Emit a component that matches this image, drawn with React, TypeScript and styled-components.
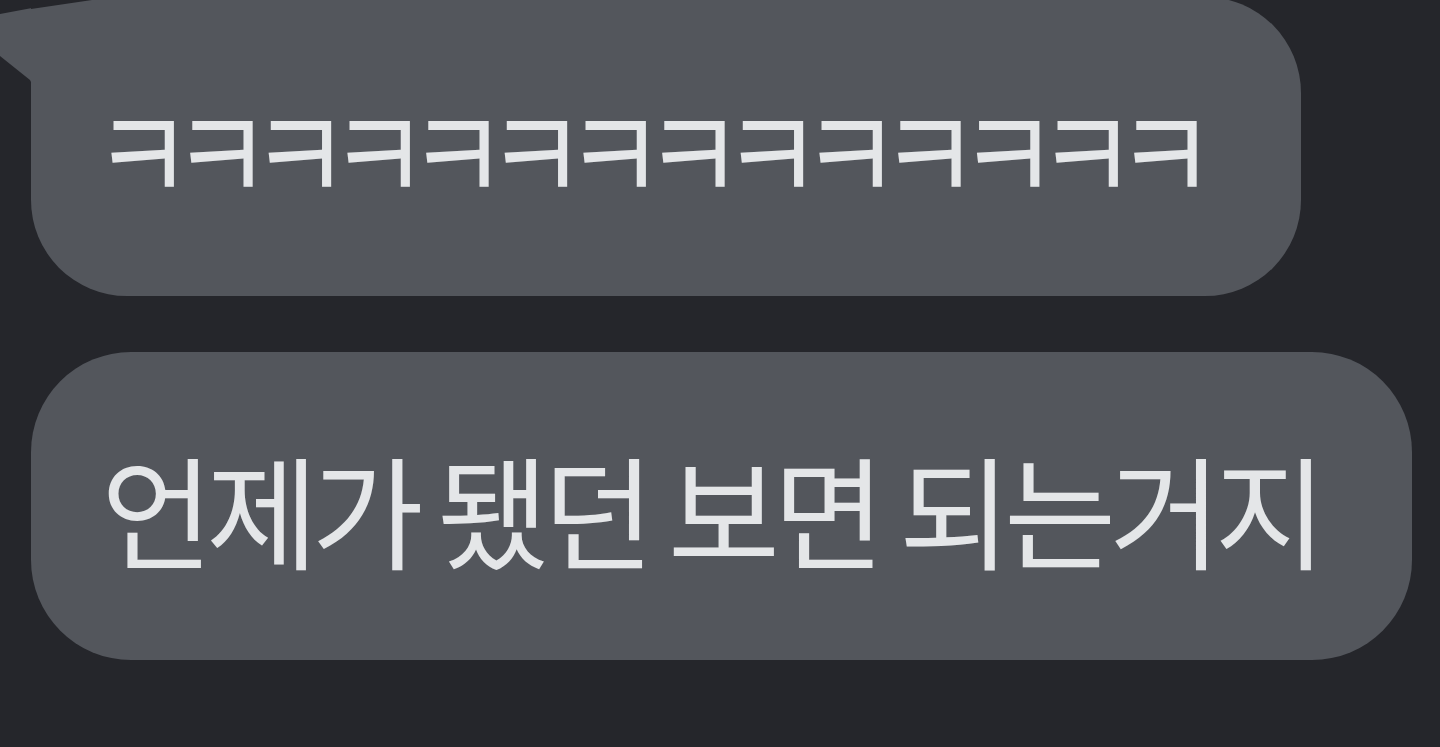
import React from 'react';
import styled, { createGlobalStyle } from 'styled-components';

const GlobalStyle = createGlobalStyle`
  html, body {
    margin: 0;
    padding: 0;
    background: #25262b;
  }
`;

const Screen = styled.div`
  width: 1440px;
  height: 747px;
  overflow: hidden;
  background: #25262b;
  display: flex;
  flex-direction: column;
  align-items: flex-start;
  gap: 56px;
  font-family: 'Noto Sans CJK KR', 'Noto Sans', sans-serif;
`;

const Bubble = styled.div<{ $first?: boolean }>`
  position: relative;
  box-sizing: border-box;
  display: flex;
  align-items: center;
  margin-left: 31px;
  margin-top: ${({ $first }) => ($first ? '-3px' : '0')};
  height: ${({ $first }) => ($first ? '299px' : '308px')};
  padding: ${({ $first }) => ($first ? '0 108px 2px 62px' : '2px 92px 0 70px')};
  background: #53565c;
  border-radius: ${({ $first }) => ($first ? '0 96px 96px 96px' : '100px')};
  color: #e4e6e8;
  font-weight: 400;
  line-height: 1;
  white-space: nowrap;
`;

const Text = styled.span<{ $size: number; $spacing: number; $squeeze?: number }>`
  display: inline-block;
  font-size: ${({ $size }) => `${$size}px`};
  letter-spacing: ${({ $spacing }) => `${$spacing}px`};
  transform: ${({ $squeeze }) => ($squeeze ? `scaleX(${$squeeze})` : 'none')};
  transform-origin: left center;
  margin-right: ${({ $squeeze }) => ($squeeze ? '-243px' : '0')};
`;

const Tail = styled.svg`
  position: absolute;
  left: -31px;
  top: 3px;
`;

const App: React.FC = () => {
  return (
    <>
      <GlobalStyle />
      <Screen>
        <Bubble $first>
          <Tail width="100" height="90" viewBox="0 0 100 90">
            <path d="M0 14 L32 8 L32 84 L30 80 L0 56 Z" fill="#53565c" />
            <path d="M31 0 L92 0 L31 9 Z" fill="#25262b" />
          </Tail>
          <Text $size={132} $spacing={-25.5} $squeeze={0.82}>
            ㅋㅋㅋㅋㅋㅋㅋㅋㅋㅋㅋㅋㅋㅋ
          </Text>
        </Bubble>
        <Bubble>
          <Text $size={122} $spacing={-7}>
            언제가 됐던 보면 되는거지
          </Text>
        </Bubble>
      </Screen>
    </>
  );
};

export default App;
